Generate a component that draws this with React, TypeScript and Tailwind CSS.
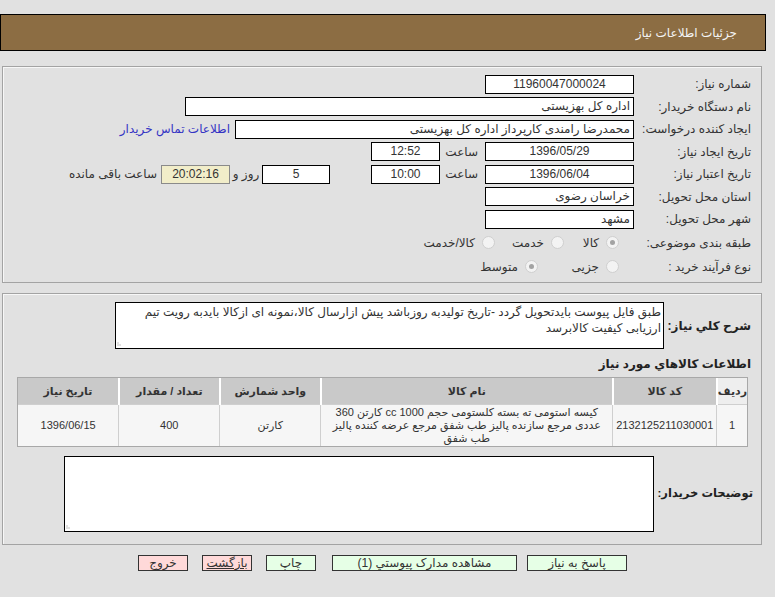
import React from 'react';

const font = { fontFamily: "'Liberation Sans', 'DejaVu Sans', sans-serif" };

const Field = ({ className, children }: { className: string; children?: React.ReactNode }) => (
    <div className={`h-[19px] shrink-0 border border-black bg-white px-[3px] leading-[17px] whitespace-nowrap overflow-hidden ${className}`}>
        {children}
    </div>
);

const Radio = ({ checked }: { checked?: boolean }) => (
    <span className="flex h-[13px] w-[13px] shrink-0 items-center justify-center rounded-full border border-[#cfcfcf] bg-[#f3f3f3]">
        {checked && <span className="h-[5px] w-[5px] rounded-full bg-[#a3a3a3]"></span>}
    </span>
);

const Row = ({ label, children, className }: { label: string; children: React.ReactNode; className: string }) => (
    <div className={`flex items-center ${className}`}>
        <div className="w-[117px] shrink-0 whitespace-nowrap text-[#333]">{label}</div>
        <div className="flex items-center">{children}</div>
    </div>
);

const Grip = () => (
    <svg className="absolute bottom-[1px] left-[1px]" width="8" height="8" viewBox="0 0 8 8">
        <path d="M1 7 L1 3 M3 7 L3 5" stroke="#c4c4c4" strokeWidth="1" />
    </svg>
);

const App = () => {
    return (
        <div dir="rtl" style={font} className="h-[597px] w-[775px] overflow-hidden bg-[#e1e1e1] pt-[14px] text-[12px] text-[#333]">
            {/* Header */}
            <div className="mr-[9px] flex h-[37px] items-center border border-black bg-[#8c6d43] pr-[28px] text-[12px] text-[#f4f4f4]">
                جزئیات اطلاعات نیاز
            </div>

            {/* Details panel */}
            <div className="mt-[15px] mr-[13px] ml-[2px] h-[217px] border border-[#a3a3a3] pt-[6px] pr-[10px] shadow-[inset_1px_1px_0_#f7f7f7]">
                <Row label="شماره نیاز:" className="h-[22.5px]">
                    <Field className="w-[149px] text-center">11960047000024</Field>
                </Row>
                <Row label="نام دستگاه خریدار:" className="h-[22.5px]">
                    <Field className="w-[449px]">اداره کل بهزیستی</Field>
                </Row>
                <Row label="ایجاد کننده درخواست:" className="h-[22.5px]">
                    <Field className="w-[399px]">محمدرضا رامندی کارپرداز اداره کل بهزیستی</Field>
                    <span className="mr-[5px] whitespace-nowrap text-[#3434c4]">اطلاعات تماس خریدار</span>
                </Row>
                <Row label="تاریخ ایجاد نیاز:" className="h-[22.5px]">
                    <Field className="w-[149px] text-center">1396/05/29</Field>
                    <span className="w-[45px] shrink-0 pr-[7px]">ساعت</span>
                    <Field className="w-[69px] text-center">12:52</Field>
                </Row>
                <Row label="تاریخ اعتبار نیاز:" className="h-[22.5px]">
                    <Field className="w-[149px] text-center">1396/06/04</Field>
                    <span className="w-[45px] shrink-0 pr-[7px]">ساعت</span>
                    <Field className="w-[69px] text-center">10:00</Field>
                    <span className="w-[41px] shrink-0"></span>
                    <Field className="w-[68px] text-center">5</Field>
                    <span className="w-[32px] shrink-0 text-center whitespace-nowrap">روز و</span>
                    <div className="h-[19px] w-[69px] shrink-0 border border-[#8a8a8a] bg-[#f1edc9] text-center leading-[17px]">20:02:16</div>
                    <span className="mr-[4px] whitespace-nowrap">ساعت باقی مانده</span>
                </Row>
                <Row label="استان محل تحویل:" className="h-[22.5px]">
                    <Field className="w-[149px]">خراسان رضوی</Field>
                </Row>
                <Row label="شهر محل تحویل:" className="h-[22.5px]">
                    <Field className="w-[149px]">مشهد</Field>
                </Row>
                <Row label="طبقه بندی موضوعی:" className="h-[24px]">
                    <div className="flex w-[70px] items-center pr-[15px]">
                        <Radio checked />
                        <span className="mr-[7px]">کالا</span>
                    </div>
                    <div className="flex w-[69px] items-center">
                        <Radio />
                        <span className="mr-[7px]">خدمت</span>
                    </div>
                    <div className="flex items-center">
                        <Radio />
                        <span className="mr-[7px] whitespace-nowrap">کالا/خدمت</span>
                    </div>
                </Row>
                <Row label="نوع فرآیند خرید :" className="h-[24px]">
                    <div className="flex w-[96px] items-center pr-[15px]">
                        <Radio />
                        <span className="mr-[7px]">جزیی</span>
                    </div>
                    <div className="flex items-center">
                        <Radio checked />
                        <span className="mr-[7px]">متوسط</span>
                    </div>
                </Row>
            </div>

            {/* Description and items panel */}
            <div className="mt-[10px] mr-[13px] ml-[2px] h-[252px] border border-[#a3a3a3] pt-[8px] shadow-[inset_1px_1px_0_#f7f7f7]">
                <div className="flex items-center pr-[10px]">
                    <div className="w-[87px] shrink-0 font-bold whitespace-nowrap text-[#222]">شرح کلي نیاز:</div>
                    <div className="relative h-[47px] w-[549px] border border-black bg-white px-[2px] pt-[1px] leading-[16px]">
                        طبق فایل پیوست بایدتحویل گردد -تاریخ تولیدبه روزباشد پیش ازارسال کالا،نمونه ای ازکالا بایدبه رویت تیم ارزیابی کیفیت کالابرسد
                        <Grip />
                    </div>
                </div>

                <div className="mt-[8px] pr-[10px] font-bold leading-[14px] text-[#222]">اطلاعات کالاهاي مورد نیاز</div>

                <div className="mt-[6px] mr-[13px] ml-[14px] border border-[#a8a8a8]">
                    <table className="w-full border-collapse text-[11px] text-[#333]">
                        <thead>
                            <tr className="h-[26px]">
                                <th className="w-[27px] border-l-2 border-white bg-[#eeeeee] font-bold">ردیف</th>
                                <th className="w-[104px] border-l-2 border-white bg-[#c9c9c9] font-bold">کد کالا</th>
                                <th className="w-[292px] border-l-2 border-white bg-[#c9c9c9] font-bold">نام کالا</th>
                                <th className="w-[101px] border-l-2 border-white bg-[#c9c9c9] font-bold">واحد شمارش</th>
                                <th className="w-[101px] border-l-2 border-white bg-[#c9c9c9] font-bold">تعداد / مقدار</th>
                                <th className="bg-[#c9c9c9] font-bold">تاریخ نیاز</th>
                            </tr>
                        </thead>
                        <tbody>
                            <tr className="h-[42px] bg-[#f6f6f6]">
                                <td className="border-t border-l border-[#cfcfcf] text-center">1</td>
                                <td className="border-t border-l border-[#cfcfcf] text-center">2132125211030001</td>
                                <td className="border-t border-l border-[#cfcfcf] px-[4px] text-center leading-[13px]">
                                    کیسه استومی ته بسته کلستومی حجم 1000 cc کارتن 360 عددی مرجع سازنده پالیز طب شفق مرجع عرضه کننده پالیز طب شفق
                                </td>
                                <td className="border-t border-l border-[#cfcfcf] text-center">کارتن</td>
                                <td className="border-t border-l border-[#cfcfcf] text-center">400</td>
                                <td className="border-t border-[#cfcfcf] text-center">1396/06/15</td>
                            </tr>
                        </tbody>
                    </table>
                </div>

                <div className="mt-[9px] flex items-center pr-[8px]">
                    <div className="w-[99px] shrink-0 text-[11.5px] font-bold whitespace-nowrap text-[#222]">توضیحات خریدار:</div>
                    <div className="relative h-[76px] w-[590px] border border-black bg-white">
                        <Grip />
                    </div>
                </div>
            </div>

            {/* Buttons */}
            <div className="mt-[10px] flex pr-[148px] text-[12px]">
                <div className="flex h-[16px] w-[100px] items-center justify-center border border-[#333] bg-[#e6ffe6] leading-none">پاسخ به نیاز</div>
                <div className="mr-[10px] flex h-[16px] w-[185px] items-center justify-center border border-[#333] bg-[#e6ffe6] leading-none">مشاهده مدارک پیوستي (1)</div>
                <div className="mr-[16px] flex h-[16px] w-[50px] items-center justify-center border border-[#333] bg-[#e6ffe6] leading-none">چاپ</div>
                <div className="mr-[14px] flex h-[16px] w-[50px] items-center justify-center border border-[#333] bg-[#ffd9d9] leading-none underline">بازگشت</div>
                <div className="mr-[14px] flex h-[16px] w-[50px] items-center justify-center border border-[#333] bg-[#ffd9d9] leading-none">خروج</div>
            </div>
        </div>
    );
};

export default App;
